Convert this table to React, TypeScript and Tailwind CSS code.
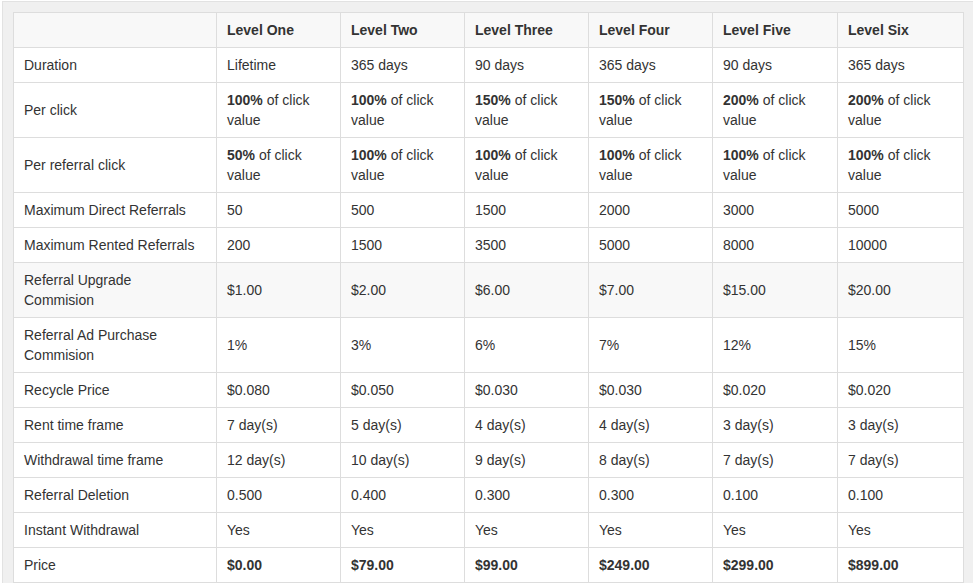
import React from 'react';

type Cell = string | { b: string; rest: string };

interface Row {
  label: string;
  cells: Cell[];
  bold?: boolean;
  shaded?: boolean;
}

const levels = ['Level One', 'Level Two', 'Level Three', 'Level Four', 'Level Five', 'Level Six'];

const pct = (b: string): Cell => ({ b, rest: ' of click value' });

const rows: Row[] = [
  { label: 'Duration', cells: ['Lifetime', '365 days', '90 days', '365 days', '90 days', '365 days'] },
  { label: 'Per click', cells: [pct('100%'), pct('100%'), pct('150%'), pct('150%'), pct('200%'), pct('200%')] },
  { label: 'Per referral click', cells: [pct('50%'), pct('100%'), pct('100%'), pct('100%'), pct('100%'), pct('100%')] },
  { label: 'Maximum Direct Referrals', cells: ['50', '500', '1500', '2000', '3000', '5000'] },
  { label: 'Maximum Rented Referrals', cells: ['200', '1500', '3500', '5000', '8000', '10000'] },
  { label: 'Referral Upgrade Commision', cells: ['$1.00', '$2.00', '$6.00', '$7.00', '$15.00', '$20.00'], shaded: true },
  { label: 'Referral Ad Purchase Commision', cells: ['1%', '3%', '6%', '7%', '12%', '15%'] },
  { label: 'Recycle Price', cells: ['$0.080', '$0.050', '$0.030', '$0.030', '$0.020', '$0.020'] },
  { label: 'Rent time frame', cells: ['7 day(s)', '5 day(s)', '4 day(s)', '4 day(s)', '3 day(s)', '3 day(s)'] },
  { label: 'Withdrawal time frame', cells: ['12 day(s)', '10 day(s)', '9 day(s)', '8 day(s)', '7 day(s)', '7 day(s)'] },
  { label: 'Referral Deletion', cells: ['0.500', '0.400', '0.300', '0.300', '0.100', '0.100'] },
  { label: 'Instant Withdrawal', cells: ['Yes', 'Yes', 'Yes', 'Yes', 'Yes', 'Yes'] },
  { label: 'Price', cells: ['$0.00', '$79.00', '$99.00', '$249.00', '$299.00', '$899.00'], bold: true },
];

const cellBase = 'border border-[#dddddd] py-[7px] pl-[10px] pr-[10px] align-middle text-left leading-5';

export default function App() {
  return (
    <div className="min-h-screen bg-white font-['Liberation_Sans',Arial,sans-serif] text-[14px] text-[#333333]">
      <div className="ml-[2px] mt-[1px] min-h-[582px] border-l border-t border-[#e2e2e2] bg-[#f0f0f0] pl-[10px] pt-[10px]">
        <table className="w-[950px] table-fixed border-collapse bg-white">
          <colgroup>
            <col className="w-[203px]" />
            <col className="w-[124px]" />
            <col className="w-[124px]" />
            <col className="w-[124px]" />
            <col className="w-[124px]" />
            <col className="w-[125px]" />
            <col className="w-[126px]" />
          </colgroup>
          <thead>
            <tr className="bg-[#f8f8f8]">
              <th className={`${cellBase} pr-[16px]`}></th>
              {levels.map((l) => (
                <th key={l} className={`${cellBase} font-bold`}>
                  {l}
                </th>
              ))}
            </tr>
          </thead>
          <tbody>
            {rows.map((r) => (
              <tr key={r.label} className={r.shaded ? 'bg-[#f8f8f8]' : ''}>
                <td className={`${cellBase} pr-[16px]`}>{r.label}</td>
                {r.cells.map((c, i) => (
                  <td key={i} className={`${cellBase} ${r.bold ? 'font-bold' : ''}`}>
                    {typeof c === 'string' ? (
                      c
                    ) : (
                      <>
                        <b className="font-bold">{c.b}</b>
                        {c.rest}
                      </>
                    )}
                  </td>
                ))}
              </tr>
            ))}
          </tbody>
        </table>
      </div>
    </div>
  );
}
